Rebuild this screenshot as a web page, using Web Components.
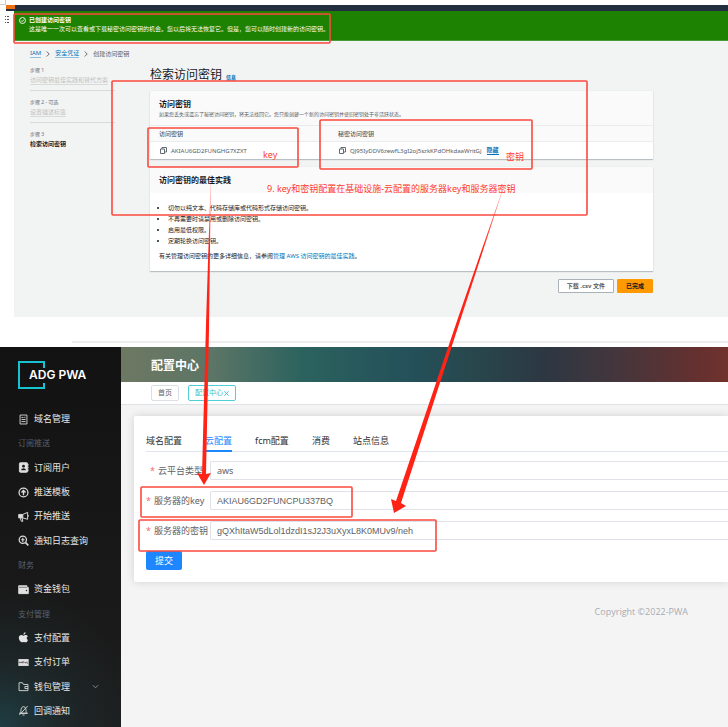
<!DOCTYPE html>
<html lang="zh-CN">
<head>
<meta charset="utf-8">
<title>访问密钥配置说明</title>
<style>
html, body { margin: 0; background: #fff; }
body { font-family: "Noto Sans", "Noto Sans CJK SC", sans-serif; overflow: hidden; }
</style>
</head>
<body>
<guide-page></guide-page>

<template id="guide-page">
<style>
:host { display: flex; flex-direction: column; position: relative; min-height: 100vh; }
.divider { height: 2px; margin: 24px 0 4px 72px; background: #ededed; }
admin-app { flex: 1; }
</style>
<aws-console></aws-console>
<div class="divider"></div>
<admin-app></admin-app>
<guide-marks></guide-marks>
</template>

<template id="aws-console">
<style>
:host { display: grid; grid-template-columns: 14px 1fr; grid-template-rows: 5px 6px auto; }
.corner { width: 5px; height: 4px; border-right: 1px solid #ccc; border-bottom: 1px solid #ccc; grid-column: 1 / 3; }
.nav { grid-column: 1 / 3; margin-left: 6px; background: #232f3e; display: flex; }
.nav i { width: 9px; height: 4px; background: #ec7211; }
.gutter svg { display: block; margin: 4px 0 0 4px; }
.page { background: #f2f3f3; }
.body { display: grid; grid-template-columns: 85px 1fr; column-gap: 35px; padding: 0 75px 24px 16px; }
.crumbs { padding: 9px 16px 8px; display: flex; align-items: center; gap: 5px; font-size: 6px; line-height: 8px; color: #545b64; }
.crumbs a { color: #0073bb; text-decoration: none; border-bottom: 1px solid #8fbfdd; line-height: 7px; }
h1 { margin: 1px 0 8px; font-size: 12px; line-height: 16px; font-weight: 400; color: #16191f; display: flex; align-items: center; gap: 4px; }
h1 a { font-size: 5px; line-height: 6px; font-weight: 700; color: #0073bb; text-decoration: none; border-bottom: 1px solid #8fbfdd; margin-top: 4px; }
p { margin: 0; }
.sub { font-size: 5px; line-height: 8px; color: #545b64; }
table { width: 100%; border-collapse: collapse; table-layout: fixed; font-size: 6px; color: #545b64; }
th, td { height: 17px; padding: 0 9px; text-align: left; font-weight: 400; line-height: 8px; }
th { background: #fafafa; border-top: 1px solid #eaeded; border-bottom: 1px solid #eaeded; height: 15px; color: #545b64; font-weight: 500; }
th:first-child, td:first-child { width: 161px; }
.cell { display: flex; align-items: center; gap: 3px; }
td a { color: #0073bb; font-weight: 700; text-decoration: none; border-bottom: 1px solid #0073bb; line-height: 7px; margin-left: 2px; }
ul { margin: 9px 0 0; padding: 0 0 0 18px; font-size: 6px; }
li { color: #16191f; line-height: 12px; height: 11px; }
.more { padding: 5px 9px 10px; font-size: 6px; line-height: 10px; color: #16191f; }
.more a { color: #0073bb; text-decoration: none; }
.actions { display: flex; justify-content: flex-end; gap: 3px; }
button { font: 700 6px/10px "Noto Sans", "Noto Sans CJK SC", sans-serif; padding: 0 8px; height: 14px; border: 1px solid #aab2b8; border-radius: 1px; background: #fff; color: #545b64; }
button.primary { background: #ff9900; border-color: #ff9900; color: #16191f; }
</style>
<div class="corner"></div>
<div class="nav"><i></i></div>
<div class="gutter"><svg width="6" height="9" viewBox="0 0 6 9" fill="#555"><path d="M1 1h1v1H1zM3 1h2v1H3zM1 4h1v1H1zM3 4h2v1H3zM1 7h1v1H1zM3 7h2v1H3z"/></svg></div>
<div class="page">
  <aws-flash heading="已创建访问密钥">这是唯一一次可以查看或下载秘密访问密钥的机会。您以后将无法恢复它。但是，您可以随时创建新的访问密钥。</aws-flash>
  <nav class="crumbs">
    <a href="#iam">IAM</a>
    <svg width="4" height="6" viewBox="0 0 4 6" fill="none" stroke="#687078"><path d="M.7.5 3.2 3 .7 5.5"/></svg>
    <a href="#credentials">安全凭证</a>
    <svg width="4" height="6" viewBox="0 0 4 6" fill="none" stroke="#687078"><path d="M.7.5 3.2 3 .7 5.5"/></svg>
    <span>创建访问密钥</span>
  </nav>
  <div class="body">
    <aside>
      <aws-step label="步骤 1">访问密钥最佳实践和替代方案</aws-step>
      <aws-step label="步骤 2 - 可选">设置描述标签</aws-step>
      <aws-step label="步骤 3" current>检索访问密钥</aws-step>
    </aside>
    <main>
      <h1>检索访问密钥 <a href="#info">信息</a></h1>
      <aws-card>
        <span slot="title">访问密钥</span>
        <p slot="sub" class="sub">如果您丢失或遗忘了秘密访问密钥，将无法找回它。您只能创建一个新的访问密钥并使旧密钥处于非活跃状态。</p>
        <table>
          <tr><th>访问密钥</th><th>秘密访问密钥</th></tr>
          <tr>
            <td><div class="cell"><copy-icon></copy-icon><span>AKIAU6GD2FUNGHG7XZXT</span></div></td>
            <td><div class="cell"><copy-icon></copy-icon><span>QJ95IyDDV6zewfL3gI2oj5szkKPdOHkdaaWritGj</span><a href="#hide">隐藏</a></div></td>
          </tr>
        </table>
      </aws-card>
      <aws-card>
        <span slot="title">访问密钥的最佳实践</span>
        <ul>
          <li>切勿以纯文本、代码存储库或代码形式存储访问密钥。</li>
          <li>不再需要时请禁用或删除访问密钥。</li>
          <li>启用最低权限。</li>
          <li>定期轮换访问密钥。</li>
        </ul>
        <p class="more">有关管理访问密钥的更多详细信息，请参阅<a href="#best">管理 AWS 访问密钥的最佳实践</a>。</p>
      </aws-card>
      <div class="actions"><button type="button">下载 .csv 文件</button><button type="button" class="primary">已完成</button></div>
    </main>
  </div>
</div>
</template>

<template id="aws-flash">
<style>
:host { display: flex; gap: 3px; padding: 5px 5px 6px; background: #1d8102; color: #fff; font-size: 6px; line-height: 9px; border-bottom: 1px solid #4a9a38; }
svg { margin-top: 1px; flex: none; }
b, p { display: block; margin: 0; }
</style>
<svg width="7" height="7" viewBox="0 0 14 14" fill="none" stroke="#fff" stroke-width="1.8"><circle cx="7" cy="7" r="6"/><path d="m4 7 2.3 2.3L10 5.2"/></svg>
<div><b></b><p><slot></slot></p></div>
</template>

<template id="aws-step">
<style>
:host { display: block; height: 24px; margin-bottom: 7px; border-bottom: 1px solid #d5dbdb; font-size: 6px; line-height: 10px; }
:host([current]) { border: 0; }
small { display: block; font-size: 5px; line-height: 9px; color: #687078; }
a { color: #bcc2c4; text-decoration: none; border-bottom: 1px solid #d5dbdb; }
:host([current]) a { color: #16191f; font-weight: 700; border: 0; }
</style>
<small></small><a href="#step"><slot></slot></a>
</template>

<template id="aws-card">
<style>
:host { display: block; background: #fff; margin-bottom: 8px; box-shadow: 0 1px 1px #b9bfc3, 0 0 1px #d9dcde; }
header { background: #fafafa; padding: 7px 9px; }
h2 { margin: 0; font-size: 8px; line-height: 12px; font-weight: 700; color: #16191f; }
</style>
<header><h2><slot name="title"></slot></h2><slot name="sub"></slot></header>
<slot></slot>
</template>

<template id="copy-icon">
<style>:host { display: block; margin: 0 1px; } svg { display: block; }</style>
<svg width="7" height="7" viewBox="0 0 14 14" fill="none" stroke="#545b64" stroke-width="1.8"><path d="M1 4h8v9H1zM4 4V1h9v9H9"/></svg>
</template>

<template id="admin-app">
<style>
:host { display: grid; grid-template-columns: 121px 1fr; background: #f4f4f4; color: #303133; }
.side { background: radial-gradient(circle at 0 100%, #1f3d43 0, rgba(31,50,54,.5) 60px, transparent 140px), linear-gradient(#121212, #1d1d1d); display: flex; flex-direction: column; padding-bottom: 4px; }
.logo { height: 28px; margin: 14px 18px 18px; display: grid; align-items: center; }
.logo > * { grid-area: 1 / 1; }
.logo b { font: 600 12px/16px Inter, sans-serif; color: #fff; padding-left: 11px; white-space: nowrap; }
.menu { flex: 1; display: grid; grid-auto-rows: 1fr; }
.top { height: 35px; padding: 2px 0 0 30px; box-sizing: border-box; display: flex; align-items: center; color: #fff; background: linear-gradient(90deg, #6d7862 0, #5c7566 15%, #2b625e 30%, #24505a 48%, #28474d 58%, #2d3742 70%, #45363c 82%, #65302f 95%, #70332e 100%); }
h1 { margin: 0; font-size: 12px; line-height: 16px; font-weight: 700; }
.tags { display: flex; gap: 9px; padding: 3px 30px; border-bottom: 1px solid #e0e3e6; background: #fff; }
.tags button { font: 7px/12px "Noto Sans", "Noto Sans CJK SC", sans-serif; height: 16px; padding: 0 6px; border: 1px solid #dcdfe6; border-radius: 2px; background: #fff; color: #606266; display: flex; align-items: center; gap: 1px; }
.tags .on { border-color: #4fd0d9; color: #2fc3ce; }
.card { margin: 11px 0 0 13px; padding: 16px 0 12px 12px; background: #fff; box-shadow: 0 0 8px rgba(0,0,0,.14); border-radius: 2px 0 0 2px; }
.tabs { display: flex; gap: 23px; border-bottom: 1px solid #dfe4ed; margin-bottom: 9px; }
.tabs button { font: 9px/18px "Noto Sans", "Noto Sans CJK SC", sans-serif; height: 20px; margin-bottom: -1px; padding: 0; background: none; border: 0; border-bottom: 2px solid transparent; color: #303133; }
.tabs .on { color: #1e86ff; border-color: #1e86ff; }
form { display: grid; gap: 11px; }
.submit { justify-self: start; font: 9px/12px "Noto Sans", "Noto Sans CJK SC", sans-serif; height: 19px; width: 36px; padding: 0; border: 0; border-radius: 2px; background: #1e86ff; color: #fff; }
footer { padding: 24px 40px; text-align: right; font-size: 9px; line-height: 12px; color: #a8abb2; font-family: "Open Sans", "Noto Sans CJK SC", sans-serif; }
</style>
<div class="side">
  <div class="logo">
    <svg width="28" height="28" viewBox="0 0 28 28" fill="none" stroke="#17c3d0" stroke-width="2"><path d="M26 7V1H1v26h25v-5"/></svg>
    <b>ADG PWA</b>
  </div>
  <nav class="menu">
    <side-item icon="doc">域名管理</side-item>
    <side-item group>订阅推送</side-item>
    <side-item icon="user">订阅用户</side-item>
    <side-item icon="up">推送模板</side-item>
    <side-item icon="horn">开始推送</side-item>
    <side-item icon="zoom">通知日志查询</side-item>
    <side-item group>财务</side-item>
    <side-item icon="wallet">资金钱包</side-item>
    <side-item group>支付管理</side-item>
    <side-item icon="apple">支付配置</side-item>
    <side-item icon="card">支付订单</side-item>
    <side-item icon="purse" more>钱包管理</side-item>
    <side-item icon="bell">回调通知</side-item>
  </nav>
</div>
<div class="main">
  <header class="top"><h1>配置中心</h1></header>
  <div class="tags"><button type="button">首页</button><button type="button" class="on">配置中心<svg width="5" height="5" viewBox="0 0 5 5" stroke="#2fc3ce" stroke-width=".9"><path d="m.4.4 4.2 4.2M4.6.4.4 4.6"/></svg></button></div>
  <section class="card">
    <div class="tabs">
      <button type="button">域名配置</button><button type="button" class="on">云配置</button><button type="button">fcm配置</button><button type="button">消费</button><button type="button">站点信息</button>
    </div>
    <form>
      <form-row label="云平台类型" value="aws" kind="select"></form-row>
      <form-row label="服务器的key" value="AKIAU6GD2FUNCPU337BQ"></form-row>
      <form-row label="服务器的密钥" value="gQXhItaW5dLol1dzdI1sJ2J3uXyxL8K0MUv9/neh"></form-row>
      <button type="button" class="submit">提交</button>
    </form>
  </section>
  <footer>Copyright ©2022-PWA</footer>
</div>
</template>

<template id="side-item">
<style>
:host { display: flex; align-items: center; padding: 0 22px 0 18px; font-size: 9px; line-height: 12px; }
:host([group]) { font-size: 8px; color: #5a6270; }
a { display: flex; align-items: center; gap: 5px; flex: 1; color: #e6e6e6; text-decoration: none; }
a svg { width: 11px; height: 11px; fill: none; stroke: #dcdcdc; stroke-width: 1.3; }
a svg:last-child { margin-left: auto; width: 7px; height: 7px; stroke: #999; stroke-width: 1; }
</style>
</template>

<template id="form-row">
<style>
:host { display: grid; grid-template-columns: 57px 1fr; column-gap: 7px; align-items: center; }
label { text-align: right; font-size: 9px; line-height: 12px; color: #606266; white-space: nowrap; }
label::before { content: "*"; color: #f56c6c; margin-right: 3px; }
input, select { appearance: none; box-sizing: border-box; width: 100%; height: 19px; margin: 0; padding: 0 6px; border: 1px solid #dfe2e8; border-right: 0; border-radius: 2px 0 0 2px; background: #fff; color: #606266; font: 9px/12px "Liberation Sans", sans-serif; }
select { font-family: "Noto Sans", sans-serif; }
</style>
</template>

<template id="guide-marks">
<style>
:host { position: absolute; inset: 0; pointer-events: none; }
svg { display: block; overflow: visible; width: 100%; height: 100%; }
text { fill: #ff3b30; font-size: 9px; }
rect { fill: none; stroke: #fb4a3e; stroke-width: 1.6; }
</style>
<svg>
  <defs>
    <linearGradient id="f" gradientUnits="userSpaceOnUse" x1="0" y1="165" x2="0" y2="250"><stop offset="0" stop-color="#ff2316" stop-opacity=".2"/><stop offset="1" stop-color="#ff2316"/></linearGradient>
  </defs>
  <rect x="14" y="14" width="316" height="29" rx="1"/>
  <rect x="112" y="81" width="475" height="134" rx="1"/>
  <rect x="148" y="128" width="150" height="39" rx="1"/>
  <rect x="320" y="120" width="212" height="49" rx="1"/>
  <rect x="141" y="487" width="211" height="30" rx="1"/>
  <rect x="139" y="520" width="297" height="31" rx="1"/>
  <path fill="url(#f)" d="M211 168 209 330 206 474 211 473 204 485 197 473 202 474 206 324Z"/>
  <path fill="url(#f)" d="M508 174 461 318 401 503 406 506 394 513 391 499 396 501 458 318Z"/>
  <text x="263" y="158">key</text>
  <text x="506" y="160">密钥</text>
  <text x="267" y="192">9. key和密钥配置在基础设施-云配置的服务器key和服务器密钥</text>
</svg>
</template>

<script>
const stamp = (el) => {
  const root = el.attachShadow({ mode: 'open' });
  root.append(document.getElementById(el.localName).content.cloneNode(true));
  return root;
};
const simple = () => class extends HTMLElement {
  connectedCallback() { if (!this.shadowRoot) stamp(this); }
};
for (const name of ['aws-card', 'copy-icon', 'guide-marks']) customElements.define(name, simple());

customElements.define('aws-flash', class extends HTMLElement {
  connectedCallback() { stamp(this).querySelector('b').textContent = this.getAttribute('heading'); }
});
customElements.define('aws-step', class extends HTMLElement {
  connectedCallback() { stamp(this).querySelector('small').textContent = this.getAttribute('label'); }
});

const icons = {
  doc: '<path d="M3 1.5h10v13H3zM5 5h3M5 8h6M5 11h6M10 4v2"/>',
  user: '<rect x="2" y="1" width="12" height="14" rx="1.5" fill="#e0e0e0"/><path d="M14.7 3v2M14.7 7v2M14.7 11v2"/><circle cx="8" cy="6" r="2" fill="#181818" stroke="none"/><path d="M4.5 12c0-4 7-4 7 0z" fill="#181818" stroke="none"/>',
  up: '<circle cx="8" cy="8" r="6.5" stroke-width="1.8"/><path d="M8 12V5M5 8l3-3 3 3" stroke-width="2"/>',
  horn: '<path d="M1 5h6v5H1z" fill="#e0e0e0"/><path d="M7 5l7-3v10L7 10M3 10l2 5h2l-1-5M15.5 6v2" stroke-width="1.4"/>',
  zoom: '<circle cx="7" cy="7" r="5.3" stroke-width="1.8"/><path d="m11 11 4 4" stroke-width="2.4"/><path d="M7 4v6M4.5 7h5" stroke-width="1.6"/>',
  wallet: '<path d="M1 2.5h12V5h2v9H1z" fill="#e0e0e0"/><path d="M1.5 4.8H13" stroke="#333" stroke-width=".8"/><circle cx="12.3" cy="9.5" r="1" fill="#222" stroke="none"/>',
  apple: '<path stroke="none" fill="#e4e4e4" d="M11 .5c.1 1.900-1.300 3.500-3.100 3.500C7.700 2.200 9.300.6 11 .5zM14.500 11.500c-.7 1.700-1.800 3.500-3.200 3.500-1 0-1.600-.6-2.800-.6s-1.800.6-2.800.6C3.500 15 1.200 11 1.200 8.500 1.200 6 2.900 4.500 4.800 4.500c1.300 0 2.200.8 3.200.8s2-.9 3.500-.8c1.100 0 2.200.6 2.800 1.500-2.400 1.400-2 4.500.2 5.500z"/>',
  card: '<path d="M.5 3h15v10H.5z" fill="#e0e0e0" stroke="none"/><path d="M2 9V7l1.500 1.500L5 7v2M6.500 9V7h2v2M10 7l1 2 1-2M13 7v2h1.500" stroke="#333" stroke-width=".9"/>',
  purse: '<path d="M1.500 3.500V14h13V5H8L6.500 2.500h-5zM14.500 8H10v3h4.500"/>',
  bell: '<path d="M3.500 12c1-1 .6-4 1-6C5 3.500 6.500 2.500 8 2.500s3 1 3.500 3.500c.4 2 0 5 1 6zM1.500 12h13M6.500 14.500h3M14 1.500 2 14.500"/>'
};
customElements.define('side-item', class extends HTMLElement {
  connectedCallback() {
    const root = stamp(this);
    if (this.hasAttribute('group')) { root.append(document.createElement('slot')); return; }
    const a = document.createElement('a');
    a.href = '#' + this.getAttribute('icon');
    a.innerHTML = `<svg viewBox="0 0 16 16">${icons[this.getAttribute('icon')]}</svg><span><slot></slot></span>` +
      (this.hasAttribute('more') ? '<svg viewBox="0 0 8 8"><path d="m1 2.500 3 3 3-3"/></svg>' : '');
    root.append(a);
  }
});
customElements.define('form-row', class extends HTMLElement {
  connectedCallback() {
    const root = stamp(this);
    const label = document.createElement('label');
    label.htmlFor = 'field';
    label.textContent = this.getAttribute('label');
    const value = this.getAttribute('value');
    let field;
    if (this.getAttribute('kind') === 'select') {
      field = document.createElement('select');
      field.add(new Option(value, value));
    } else {
      field = document.createElement('input');
      field.value = value;
    }
    field.id = 'field';
    root.append(label, field);
  }
});
for (const name of ['aws-console', 'admin-app', 'guide-page']) customElements.define(name, simple());
</script>
</body>
</html>
